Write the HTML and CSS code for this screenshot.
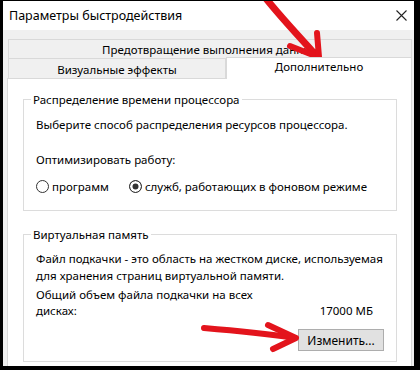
FILE: index.html
```html
<!DOCTYPE html>
<html lang="ru">
<head>
    <meta charset="UTF-8">
    <title>Параметры быстродействия</title>
    <link rel="stylesheet" href="styles.css">
</head>
<body>
    <div class="window">
        <div class="titlebar">
            <span class="title">Параметры быстродействия</span>
            <svg class="close" width="11" height="11" viewBox="0 0 11 11">
                <path d="M0.5 0.5 L10.5 10.5 M10.5 0.5 L0.5 10.5" stroke="#222" stroke-width="1.1" fill="none"/>
            </svg>
        </div>

        <div class="dialog">
            <div class="tab tab-top">Предотвращение выполнения данных</div>
            <div class="tab-row">
                <div class="tab tab-left">Визуальные эффекты</div>
                <div class="tab tab-active">Дополнительно</div>
            </div>

            <div class="panel">
                <fieldset class="group group-cpu">
                    <legend>Распределение времени процессора</legend>
                    <p class="hint">Выберите способ распределения ресурсов процессора.</p>
                    <p class="label">Оптимизировать работу:</p>
                    <div class="radios">
                        <label class="radio-item"><span class="radio"></span>программ</label>
                        <label class="radio-item"><span class="radio checked"></span>служб, работающих в фоновом режиме</label>
                    </div>
                </fieldset>

                <fieldset class="group group-mem">
                    <legend>Виртуальная память</legend>
                    <p class="hint">Файл подкачки - это область на жестком диске, используемая<br>для хранения страниц виртуальной памяти.</p>
                    <div class="total">
                        <span class="total-label">Общий объем файла подкачки на всех дисках:</span>
                        <span class="total-value">17000 МБ</span>
                    </div>
                    <div class="actions">
                        <button class="btn">Изменить...</button>
                    </div>
                </fieldset>
            </div>
        </div>

        <!-- стрелки поверх окна -->
        <svg class="marks" width="411" height="365" viewBox="3 1 411 365">
            <g stroke="#e3141c" stroke-linecap="round" stroke-linejoin="round" fill="none">
                <path d="M264 -4 C 278 14, 295 32, 313 52" stroke-width="7"/>
                <path d="M290 46 L 318 57" stroke-width="6"/>
                <path d="M317 33 L 319 57" stroke-width="6"/>
                <path d="M204 328 C 240 331, 268 334, 295 338" stroke-width="6"/>
                <path d="M268 325 L 296 338 L 273 349" stroke-width="6"/>
            </g>
        </svg>
    </div>
</body>
</html>
```

FILE: styles.css
```css
body {
    margin: 0;
    background: #000;
    font-family: 'Noto Sans', 'Segoe UI', sans-serif;
    font-size: 11.5px;
    color: #000;
}

.window {
    position: relative;
    margin: 1px 6px 0 3px;
    height: 365px;
    background: #f0f0f0;
    overflow: hidden;
}

.titlebar {
    height: 29px;
    background: white;
    display: flex;
    align-items: center;
    justify-content: space-between;
    padding: 0 7px 0 6px;
    font-size: 12.5px;
}

.dialog {
    padding: 9px 2px 0 4px;
}

.tab {
    background: #f0f0f0;
    border: 1px solid #d9d9d9;
    border-bottom: none;
    text-align: center;
    line-height: 17px;
}

.tab-top {
    margin-left: 1px;
    height: 18px;
    line-height: 19px;
}

.tab-row {
    display: flex;
    align-items: flex-end;
    margin-top: -1px;
}

.tab-left {
    width: 216px;
    height: 19px;
    margin-left: 1px;
    line-height: 21px;
}

.tab-active {
    flex: 1;
    height: 21px;
    margin-bottom: -1px;
    background: white;
    position: relative;
    z-index: 1;
    line-height: 18px;
}

.panel {
    background: white;
    border: 1px solid #d9d9d9;
    padding: 12px 14px 20px 15px;
}

.group {
    margin: 0;
    border: 1px solid #dcdcdc;
    padding: 0 10px 15px 12px;
}

.group legend {
    margin-left: -5px;
    padding: 0 2px;
    line-height: 17px;
}

.group p {
    margin: 0;
    line-height: 17px;
}

.group-cpu .hint {
    margin-top: 8px;
}

.group-cpu .label {
    margin-top: 18px;
}

.radios {
    display: flex;
    gap: 20px;
    margin-top: 10px;
    line-height: 17px;
}

.radio-item {
    display: flex;
    align-items: center;
    gap: 3px;
}

.radio {
    width: 11px;
    height: 11px;
    border: 1px solid #333;
    border-radius: 50%;
    background: white;
}

.radio.checked {
    background: #333;
    box-shadow: inset 0 0 0 2.5px white;
}

.group-mem {
    margin-top: 15px;
    padding-bottom: 10px;
}

.group-mem .hint {
    margin-top: 7px;
}

.total {
    display: flex;
    justify-content: space-between;
    align-items: flex-end;
    margin-top: 3px;
    padding-right: 13px;
    line-height: 16px;
}

.total-label {
    width: 230px;
}

.actions {
    display: flex;
    justify-content: flex-end;
    margin-top: 10px;
    padding-right: 2px;
}

.btn {
    width: 86px;
    height: 22px;
    background: #e1e1e1;
    border: 1px solid #adadad;
    font-family: inherit;
    font-size: 12px;
    padding: 0;
}

.marks {
    position: absolute;
    left: 0;
    top: 0;
    pointer-events: none;
}
```
